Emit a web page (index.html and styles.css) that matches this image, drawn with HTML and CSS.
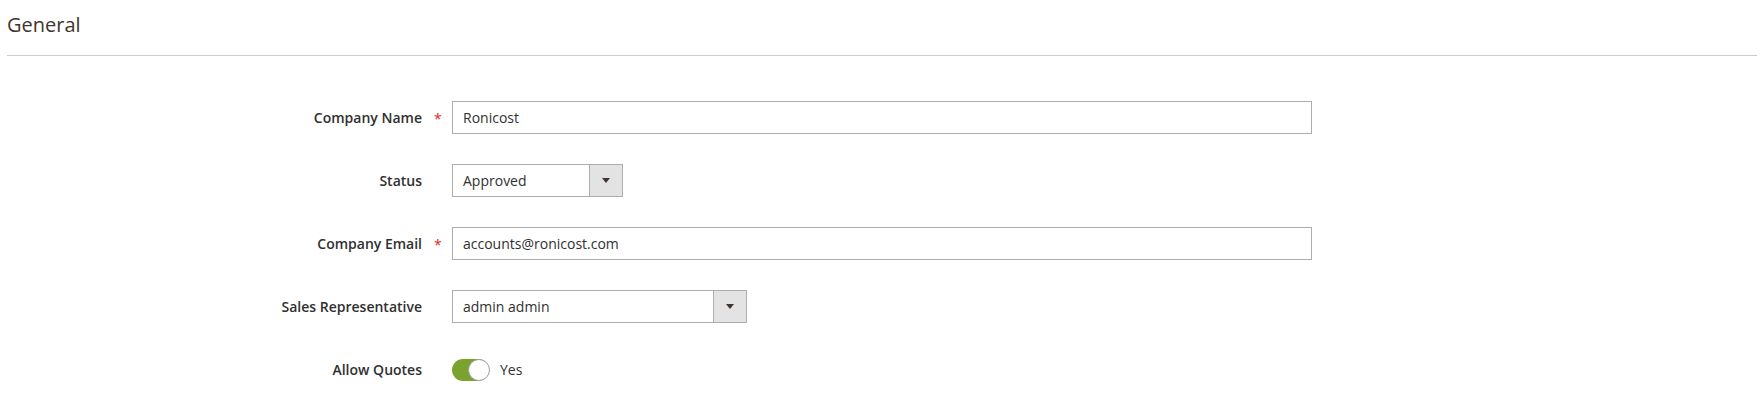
FILE: index.html
```html
<!DOCTYPE html>
<html lang="en">
<head>
<meta charset="utf-8">
<title>General</title>
<link rel="stylesheet" href="styles.css">
</head>
<body>
<div class="page">
  <div class="section-title"><span class="title">General</span></div>
  <div class="fieldset">
    <div class="field">
      <label class="label required">Company Name</label>
      <div class="control"><div class="input input-wide">Ronicost</div></div>
    </div>
    <div class="field">
      <label class="label">Status</label>
      <div class="control">
        <div class="select select-status"><span class="select-value">Approved</span><span class="select-btn"><span class="arrow"></span></span></div>
      </div>
    </div>
    <div class="field">
      <label class="label required">Company Email</label>
      <div class="control"><div class="input input-wide">accounts@ronicost.com</div></div>
    </div>
    <div class="field">
      <label class="label">Sales Representative</label>
      <div class="control">
        <div class="select select-rep"><span class="select-value">admin admin</span><span class="select-btn"><span class="arrow"></span></span></div>
      </div>
    </div>
    <div class="field">
      <label class="label">Allow Quotes</label>
      <div class="control">
        <span class="switch"><span class="knob"></span></span>
        <span class="switch-text">Yes</span>
      </div>
    </div>
  </div>
</div>
</body>
</html>
```
FILE: styles.css
```css
html, body {
  margin: 0;
  padding: 0;
  background: #ffffff;
}
body {
  font-family: "Open Sans", "Liberation Sans", sans-serif;
  color: #303030;
  font-size: 14px;
}
.page {
  padding: 0 6px 0 7px;
}
.section-title {
  padding: 11px 0 17px;
  border-bottom: 1px solid #cccccc;
}
.title {
  font-size: 20px;
  line-height: 27px;
  font-weight: 400;
  color: #41362f;
  display: block;
}
.fieldset {
  padding-top: 45px;
  display: flex;
  flex-direction: column;
  gap: 30px;
}
.field {
  display: flex;
  align-items: center;
  height: 33px;
}
.label {
  width: 415px;
  text-align: right;
  font-weight: 600;
  font-size: 14px;
  color: #303030;
  position: relative;
  flex: none;
}
.label.required::after {
  content: "*";
  color: #e22626;
  position: absolute;
  left: calc(100% + 12px);
  top: 1px;
  font-weight: 400;
  font-size: 14px;
}
.control {
  margin-left: 30px;
  display: flex;
  align-items: center;
}
.input, .select {
  height: 33px;
  box-sizing: border-box;
  border: 1px solid #adadad;
  background: #fff;
  font-size: 14px;
  color: #303030;
  display: flex;
  align-items: center;
}
.input {
  padding: 0 10px;
}
.input-wide {
  width: 860px;
}
.select-status {
  width: 171px;
}
.select-rep {
  width: 295px;
}
.select-value {
  flex: 1;
  padding: 0 10px;
}
.select-btn {
  width: 32px;
  height: 100%;
  border-left: 1px solid #adadad;
  background: #e3e3e3;
  display: flex;
  align-items: center;
  justify-content: center;
}
.arrow {
  width: 0;
  height: 0;
  border-left: 4px solid transparent;
  border-right: 4px solid transparent;
  border-top: 5px solid #41362f;
}
.switch {
  width: 37px;
  height: 22px;
  border-radius: 12px;
  background: #79a22e;
  position: relative;
  display: block;
  box-sizing: border-box;
}
.knob {
  position: absolute;
  right: -1px;
  top: 0;
  width: 22px;
  height: 22px;
  box-sizing: border-box;
  border-radius: 50%;
  background: #fff;
  border: 1px solid #a0a0a0;
}
.switch-text {
  margin-left: 11px;
  color: #303030;
}
```
